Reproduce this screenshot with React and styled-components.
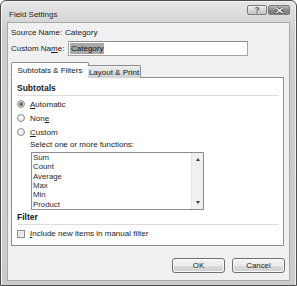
import React from "react";
import styled, { createGlobalStyle, css } from "styled-components";

const Global = createGlobalStyle`
  html, body { margin: 0; padding: 0; background: #ffffff; }
  body { font-family: "Liberation Sans", Arial, sans-serif; font-size: 8px; color: #1a1a1a; }
  * { box-sizing: border-box; }
`;

const Window = styled.div`
  width: 297px;
  height: 286px;
  border: 1px solid #4e4e4e;
  border-radius: 6px 6px 0 0;
  background: linear-gradient(#e6e6e6, #cfcfcf 30px, #cbcbcb);
  display: flex;
  flex-direction: column;
  padding: 0 6px 4px 6px;
  box-shadow: inset 1px 1px 0 #f4f4f4, inset -1px 0 0 #f0f0f0;
`;

const TitleBar = styled.div`
  height: 21px;
  display: flex;
  align-items: center;
  justify-content: space-between;
  padding: 0 0 0 2px;
`;

const Title = styled.div`
  font-size: 8px;
  color: #1e1e1e;
  margin-top: 5px;
`;

const CaptionButtons = styled.div`
  display: flex;
  gap: 1px;
  margin-top: -3px;
`;

const CaptionButton = styled.div`
  width: ${(p) => p.$w}px;
  height: 10px;
  border: 1px solid #7a7a7a;
  border-radius: 2px;
  display: flex;
  align-items: center;
  justify-content: center;
  ${(p) =>
    p.$close
      ? css`background: linear-gradient(#bdbdbd, #8a8a8a 50%, #7a7a7a);`
      : css`background: linear-gradient(#f0f0f0, #d6d6d6 50%, #c6c6c6);`}
`;

const Client = styled.div`
  flex: 1;
  background: #f0f0f0;
  border: 1px solid #a8a8a8;
  display: flex;
  flex-direction: column;
  padding: 0 4px 0 3px;
`;

const InfoRow = styled.div`
  display: flex;
  align-items: center;
  height: ${(p) => p.$h}px;
  margin-top: ${(p) => p.$mt}px;
`;

const Label = styled.div`
  width: 54px;
  flex: none;
  white-space: nowrap;
`;

const Value = styled.div``;

const Input = styled.div`
  width: 180px;
  height: 15px;
  margin-left: 3px;
  border: 1px solid #a4a4a4;
  border-top-color: #8c8c8c;
  background: #fff;
  display: flex;
  align-items: center;
  padding-left: 1px;
`;

const Selected = styled.span`
  background: #a9a9a9;
  color: #111;
  padding: 1px 1px;
  line-height: 9px;
`;

const U = styled.span`
  text-decoration: underline;
  text-underline-offset: 1px;
`;

const TabStrip = styled.div`
  display: flex;
  align-items: flex-end;
  height: 16px;
  margin-top: 6px;
  position: relative;
  z-index: 1;
  margin-bottom: -1px;
`;

const Tab = styled.div`
  display: flex;
  align-items: center;
  justify-content: center;
  white-space: nowrap;
  border: 1px solid #8e8e8e;
  ${(p) =>
    p.$active
      ? css`
          width: 78px;
          height: 16px;
          background: #fff;
          border-bottom-color: #fff;
          border-radius: 2px 2px 0 0;
        `
      : css`
          width: 53px;
          height: 13px;
          margin-left: -1px;
          border-left: none;
          background: linear-gradient(#f0f0f0, #dedede 50%, #d2d2d2);
          border-bottom: none;
          border-radius: 0 2px 0 0;
          padding-top: 1px;
        `}
`;

const Panel = styled.div`
  height: 169px;
  width: 273px;
  background: #fff;
  border: 1px solid #8e8e8e;
  display: flex;
  flex-direction: column;
  padding: 0 4px 0 5px;
`;

const Heading = styled.div`
  font-weight: bold;
  font-size: 8.5px;
  height: 10px;
  line-height: 10px;
  margin-top: ${(p) => p.$mt}px;
`;

const Divider = styled.div`
  height: 1px;
  background: #dcdcdc;
  margin-top: ${(p) => p.$mt}px;
`;

const OptionRow = styled.div`
  display: flex;
  align-items: center;
  height: ${(p) => p.$h || 14}px;
  gap: 5px;
  margin-top: ${(p) => p.$mt || 0}px;
`;

const Radio = styled.div`
  width: 8px;
  height: 8px;
  border-radius: 50%;
  border: 1px solid #8c8c8c;
  background: radial-gradient(circle at 40% 40%, #ffffff, #dadada);
  display: flex;
  align-items: center;
  justify-content: center;
  &::after {
    content: "";
    display: ${(p) => (p.$checked ? "block" : "none")};
    width: 4px;
    height: 4px;
    border-radius: 50%;
    background: radial-gradient(circle at 40% 40%, #8a8a8a, #262626);
  }
`;

const Checkbox = styled.div`
  width: 8px;
  height: 8px;
  border: 1px solid #8c8c8c;
  background: linear-gradient(135deg, #d4d4d4, #f8f8f8);
  box-shadow: inset 0 0 0 1px #eeeeee;
`;

const SubLabel = styled.div`
  margin-left: 13px;
  height: 12px;
  line-height: 12px;
`;

const ListBox = styled.div`
  margin-left: 14px;
  width: 173px;
  height: 58px;
  border: 1px solid #8c8c8c;
  display: flex;
  margin-top: 1px;
`;

const Items = styled.div`
  flex: 1;
  padding: 0 0 0 1px;
`;

const Item = styled.div`
  height: 9.35px;
  line-height: 9.35px;
  color: #2a2a2a;
  font-size: 7.8px;
`;

const ScrollBar = styled.div`
  width: 12px;
  background: #f0f0f0;
  border-left: 1px solid #e2e2e2;
  display: flex;
  flex-direction: column;
  justify-content: space-between;
  align-items: center;
  padding: 5px 0 5px;
`;

const Arrow = styled.div`
  width: 0;
  height: 0;
  border-left: 2.5px solid transparent;
  border-right: 2.5px solid transparent;
  ${(p) =>
    p.$down
      ? css`border-top: 3px solid #3c3c3c;`
      : css`border-bottom: 3px solid #3c3c3c;`}
`;

const Footer = styled.div`
  display: flex;
  justify-content: flex-end;
  gap: 7px;
  margin-top: 12px;
`;

const Button = styled.div`
  width: 53px;
  height: 15px;
  border: 1px solid #707070;
  border-radius: 3px;
  background: linear-gradient(#f3f3f3, #ebebeb 50%, #dcdcdc 51%, #cfcfcf);
  box-shadow: inset 0 0 0 1px #fbfbfb;
  display: flex;
  align-items: center;
  justify-content: center;
  font-size: 7.8px;
`;

export default function App() {
  return (
    <>
      <Global />
      <Window>
        <TitleBar>
          <Title>Field Settings</Title>
          <CaptionButtons>
            <CaptionButton $w={20}>
              <svg width="8" height="8" viewBox="0 0 8 8">
                <path
                  d="M2.2 2.6 C2.2 1.2 5.8 1.2 5.8 2.6 C5.8 3.8 4 3.8 4 5"
                  fill="none"
                  stroke="#6a6a6a"
                  strokeWidth="1.3"
                />
                <rect x="3.3" y="5.8" width="1.4" height="1.4" fill="#6a6a6a" />
              </svg>
            </CaptionButton>
            <CaptionButton $w={22} $close>
              <svg width="9" height="7" viewBox="0 0 9 7">
                <path d="M1.5 1 L7.5 6 M7.5 1 L1.5 6" stroke="#3a3a3a" strokeWidth="2.6" />
                <path d="M1.5 1 L7.5 6 M7.5 1 L1.5 6" stroke="#ffffff" strokeWidth="1.4" />
              </svg>
            </CaptionButton>
          </CaptionButtons>
        </TitleBar>
        <Client>
          <InfoRow $h={11} $mt={4}>
            <Label>Source Name:</Label>
            <Value>Category</Value>
          </InfoRow>
          <InfoRow $h={15} $mt={3}>
            <Label>
              Custom Na<U>m</U>e:
            </Label>
            <Input>
              <Selected>Category</Selected>
            </Input>
          </InfoRow>
          <TabStrip>
            <Tab $active>Subtotals &amp; Filters</Tab>
            <Tab>Layout &amp; Print</Tab>
          </TabStrip>
          <Panel>
            <Heading $mt={5}>Subtotals</Heading>
            <Divider $mt={2} />
            <OptionRow $mt={1}>
              <Radio $checked />
              <span>
                <U>A</U>utomatic
              </span>
            </OptionRow>
            <OptionRow>
              <Radio />
              <span>
                Non<U>e</U>
              </span>
            </OptionRow>
            <OptionRow>
              <Radio />
              <span>
                <U>C</U>ustom
              </span>
            </OptionRow>
            <SubLabel>Select one or more functions:</SubLabel>
            <ListBox>
              <Items>
                {["Sum", "Count", "Average", "Max", "Min", "Product"].map((t) => (
                  <Item key={t}>{t}</Item>
                ))}
              </Items>
              <ScrollBar>
                <Arrow />
                <Arrow $down />
              </ScrollBar>
            </ListBox>
            <Heading $mt={2}>Filter</Heading>
            <Divider $mt={2} />
            <OptionRow $h={13} $mt={2}>
              <Checkbox />
              <span>
                <U>I</U>nclude new items in manual filter
              </span>
            </OptionRow>
          </Panel>
          <Footer>
            <Button>OK</Button>
            <Button>Cancel</Button>
          </Footer>
        </Client>
      </Window>
    </>
  );
}
